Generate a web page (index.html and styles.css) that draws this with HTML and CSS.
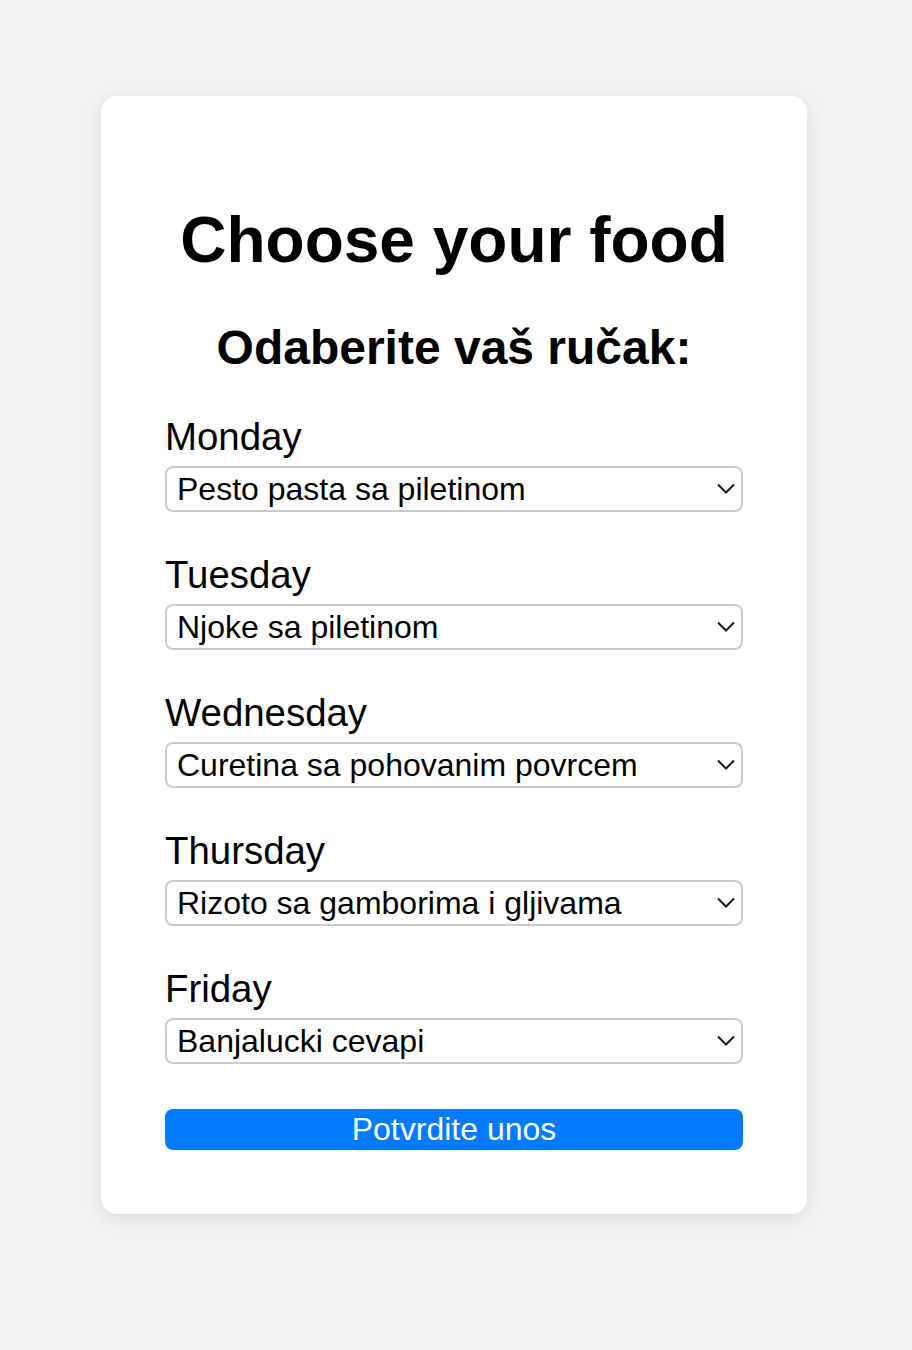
FILE: index.html
```html
<!DOCTYPE html>
<html lang="hr">
<head>
<meta charset="utf-8">
<title>Choose your food</title>
<link rel="stylesheet" href="styles.css">
</head>
<body>
<div class="page">
  <form class="card">
    <h1 class="title">Choose your food</h1>
    <h2 class="subtitle">Odaberite vaš ručak:</h2>

    <label class="day" for="mon">Monday</label>
    <div class="select-wrap">
      <select id="mon" class="select"><option>Pesto pasta sa piletinom</option></select>
      <svg class="chev" viewBox="0 0 18 11" width="18" height="11"><path d="M1 1.5 L9 9.5 L17 1.5" fill="none" stroke="#1a1a1a" stroke-width="2"/></svg>
    </div>

    <label class="day" for="tue">Tuesday</label>
    <div class="select-wrap">
      <select id="tue" class="select"><option>Njoke sa piletinom</option></select>
      <svg class="chev" viewBox="0 0 18 11" width="18" height="11"><path d="M1 1.5 L9 9.5 L17 1.5" fill="none" stroke="#1a1a1a" stroke-width="2"/></svg>
    </div>

    <label class="day" for="wed">Wednesday</label>
    <div class="select-wrap">
      <select id="wed" class="select"><option>Curetina sa pohovanim povrcem</option></select>
      <svg class="chev" viewBox="0 0 18 11" width="18" height="11"><path d="M1 1.5 L9 9.5 L17 1.5" fill="none" stroke="#1a1a1a" stroke-width="2"/></svg>
    </div>

    <label class="day" for="thu">Thursday</label>
    <div class="select-wrap">
      <select id="thu" class="select"><option>Rizoto sa gamborima i gljivama</option></select>
      <svg class="chev" viewBox="0 0 18 11" width="18" height="11"><path d="M1 1.5 L9 9.5 L17 1.5" fill="none" stroke="#1a1a1a" stroke-width="2"/></svg>
    </div>

    <label class="day" for="fri">Friday</label>
    <div class="select-wrap last">
      <select id="fri" class="select"><option>Banjalucki cevapi</option></select>
      <svg class="chev" viewBox="0 0 18 11" width="18" height="11"><path d="M1 1.5 L9 9.5 L17 1.5" fill="none" stroke="#1a1a1a" stroke-width="2"/></svg>
    </div>

    <button type="button" class="submit">Potvrdite unos</button>
  </form>
</div>
</body>
</html>
```

FILE: styles.css
```css
html, body {
  margin: 0;
  padding: 0;
  background: #f3f3f3;
}
body {
  font-family: "Liberation Sans", Arial, sans-serif;
  font-size: 32px;
  color: #000;
}
.page {
  display: flex;
  justify-content: center;
  padding: 96px 4px 136px 0;
}
.card {
  width: 578px;
  padding: 64px;
  background: #fff;
  border-radius: 16px;
  box-shadow: 0 4px 18px rgba(0, 0, 0, 0.1);
  display: flex;
  flex-direction: column;
}
.title {
  font-size: 64px;
  font-weight: bold;
  text-align: center;
  margin: 42.9px 0 42.9px;
  line-height: normal;
}
.subtitle {
  font-size: 48px;
  font-weight: bold;
  text-align: center;
  margin: 0 0 39.8px;
  line-height: normal;
}
.day {
  display: block;
  font-size: 38.4px;
  line-height: normal;
  margin-bottom: 7px;
}
.select-wrap {
  position: relative;
  margin-bottom: 41px;
}
.select-wrap.last {
  margin-bottom: 45px;
}
.select {
  display: block;
  width: 100%;
  height: 46px;
  box-sizing: border-box;
  -webkit-appearance: none;
  appearance: none;
  background: #fff;
  border: 2px solid #cccccc;
  border-radius: 8px;
  padding: 0 40px 0 10px;
  font-family: "Liberation Sans", Arial, sans-serif;
  font-size: 32px;
  color: #000;
  margin: 0;
}
.chev {
  position: absolute;
  right: 8px;
  top: 17.5px;
  pointer-events: none;
}
.submit {
  display: block;
  width: 100%;
  border: none;
  border-radius: 8px;
  background: #007bff;
  color: #fff;
  font-family: "Liberation Sans", Arial, sans-serif;
  font-size: 32px;
  line-height: normal;
  padding: 2px 0;
  margin: 0;
  cursor: pointer;
}
```
